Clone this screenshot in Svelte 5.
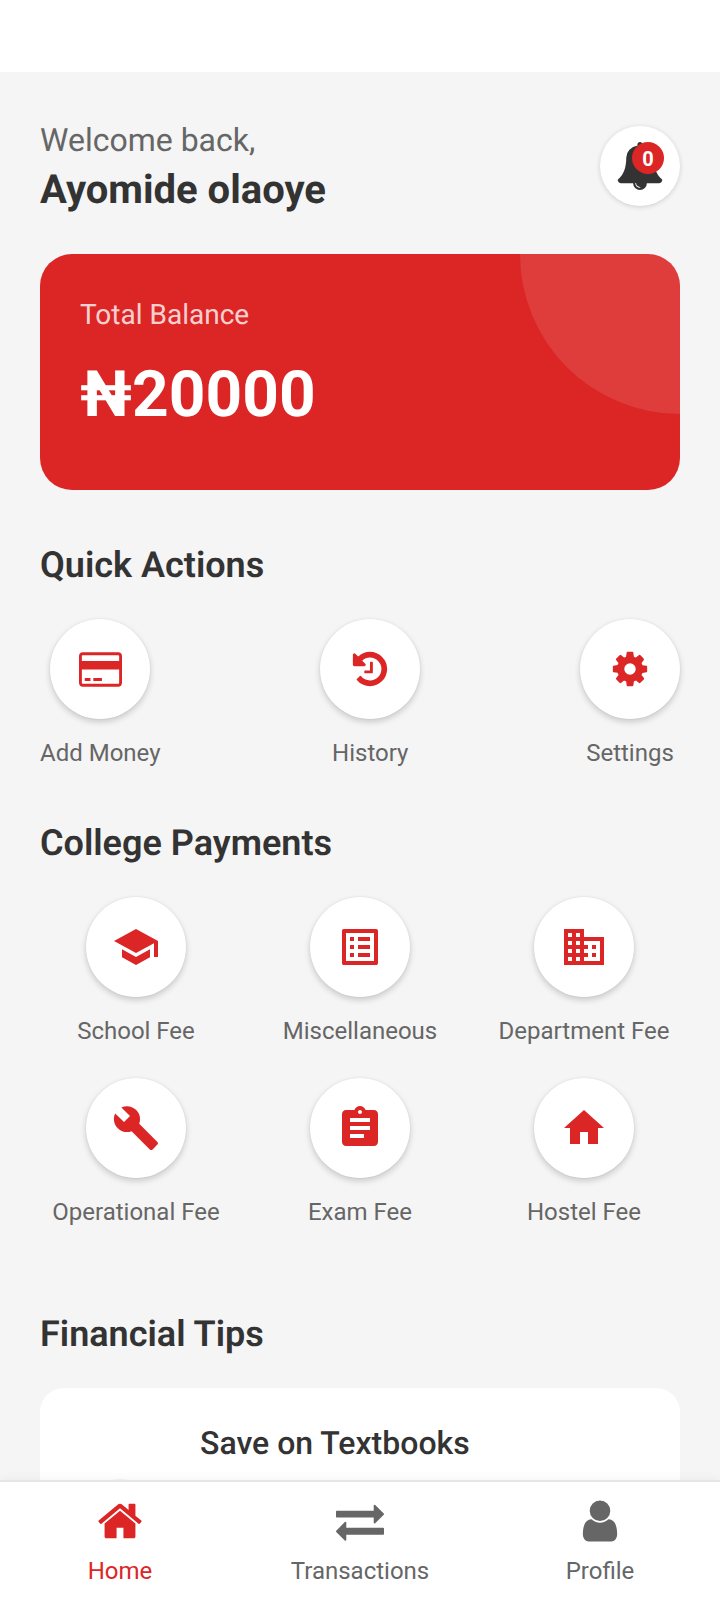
<script>
  const icons = {
    bell: {
      box: '0 0 1792 1792',
      d: 'M912 1696q0-16-16-16-59 0-101.5-42.5t-42.5-101.5q0-16-16-16t-16 16q0 73 51.5 124.5t124.5 51.5q16 0 16-16zm816-288q0 52-38 90t-90 38h-448q0 106-75 181t-181 75-181-75-75-181h-448q-52 0-90-38t-38-90q50-42 91-88t85-119.5 74.5-158.5 50-206 19.5-260q0-152 117-282.5t307-158.5q-8-19-8-39 0-40 28-68t68-28 68 28 28 68q0 20-8 39 190 28 307 158.5t117 282.5q0 139 19.5 260t50 206 74.5 158.5 85 119.5 91 88z'
    },
    card: {
      box: '0 -192 1920 1920',
      d: 'M1760 0q66 0 113 47t47 113v1216q0 66-47 113t-113 47h-1600q-66 0-113-47t-47-113v-1216q0-66 47-113t113-47h1600zm-1600 128q-13 0-22.5 9.5t-9.5 22.5v224h1664v-224q0-13-9.5-22.5t-22.5-9.5h-1600zm1600 1280q13 0 22.5-9.5t9.5-22.5v-608h-1664v608q0 13 9.5 22.5t22.5 9.5h1600zm-1504-128v-128h256v128h-256zm384 0v-128h384v128h-384z'
    },
    history: {
      box: '0 0 1792 1792',
      d: 'M1664 896q0 156-61 298t-164 245-245 164-298 61q-172 0-327-72.5t-264-204.5q-7-10-6.5-22.5t8.5-20.5l137-138q10-9 25-9 16 2 23 12 73 95 179 147t225 52q104 0 198.5-40.5t163.5-109.5 109.5-163.5 40.5-198.5-40.5-198.5-109.5-163.5-163.5-109.5-198.5-40.5q-98 0-188 35.5t-160 101.5l137 138q31 30 14 69-17 40-59 40h-448q-26 0-45-19t-19-45v-448q0-42 40-59 39-17 69 14l130 129q107-101 244.5-156.5t284.5-55.5q156 0 298 61t245 164 164 245 61 298zm-640-288v448q0 14-9 23t-23 9h-320q-14 0-23-9t-9-23v-64q0-14 9-23t23-9h224v-352q0-14 9-23t23-9h64q14 0 23 9t9 23z'
    },
    cog: {
      box: '0 0 1792 1792',
      d: 'M1152 896q0-106-75-181t-181-75-181 75-75 181 75 181 181 75 181-75 75-181zm512-109v222q0 12-8 23t-20 13l-185 28q-19 54-39 91 35 50 107 138 10 12 10 25t-9 23q-27 37-99 108t-94 71q-12 0-26-9l-138-108q-44 23-91 38-16 136-29 186-7 28-36 28h-222q-14 0-24.5-8.5t-11.5-21.5l-28-184q-49-16-90-37l-141 107q-10 9-25 9-14 0-25-11-126-114-165-168-7-10-7-23 0-12 8-23 15-21 51-66.5t54-70.5q-27-50-41-99l-183-27q-13-2-21-12.5t-8-23.5v-222q0-12 8-23t19-13l186-28q14-46 39-92-40-57-107-138-10-12-10-24 0-10 9-23 26-36 98.5-107.5t94.5-71.5q13 0 26 10l138 107q44-23 91-38 16-136 29-186 7-28 36-28h222q14 0 24.5 8.5t11.5 21.5l28 184q49 16 90 37l142-107q9-9 24-9 13 0 25 10 129 119 165 170 7 8 7 22 0 12-8 23-15 21-51 66.5t-54 70.5q26 50 41 98l183 28q13 2 21 12.5t8 23.5z'
    },
    school: {
      box: '0 0 24 24',
      d: 'M5 13.18v4L12 21l7-3.82v-4L12 17l-7-3.82zM12 3L1 9l11 6 9-4.91V17h2V9L12 3z'
    },
    list: {
      box: '0 0 24 24',
      d: 'M19 5v14H5V5h14m1.1-2H3.9c-.5 0-.9.4-.9.9v16.2c0 .4.4.9.9.9h16.2c.4 0 .9-.5.9-.9V3.9c0-.5-.5-.9-.9-.9zM11 7h6v2h-6V7zm0 4h6v2h-6v-2zm0 4h6v2h-6zM7 7h2v2H7zm0 4h2v2H7zm0 4h2v2H7z'
    },
    building: {
      box: '0 0 24 24',
      d: 'M12 7V3H2v18h20V7H12zM6 19H4v-2h2v2zm0-4H4v-2h2v2zm0-4H4V9h2v2zm0-4H4V5h2v2zm4 12H8v-2h2v2zm0-4H8v-2h2v2zm0-4H8V9h2v2zm0-4H8V5h2v2zm10 12h-8v-2h2v-2h-2v-2h2v-2h-2V9h8v10zm-2-8h-2v2h2v-2zm0 4h-2v2h2v-2z'
    },
    wrench: {
      box: '0 0 24 24',
      d: 'M22.7 19l-9.1-9.1c.9-2.3.4-5-1.5-6.9-2-2-5-2.4-7.4-1.3L9 6 6 9 1.6 4.7C.4 7.1.9 10.1 2.9 12.1c1.9 1.9 4.6 2.4 6.9 1.5l9.1 9.1c.4.4 1 .4 1.4 0l2.3-2.3c.5-.4.5-1.1.1-1.4z'
    },
    clipboard: {
      box: '0 0 24 24',
      d: 'M19 3h-4.18C14.4 1.84 13.3 1 12 1c-1.3 0-2.4.84-2.82 2H5c-1.1 0-2 .9-2 2v14c0 1.1.9 2 2 2h14c1.1 0 2-.9 2-2V5c0-1.1-.9-2-2-2zm-7 0c.55 0 1 .45 1 1s-.45 1-1 1-1-.45-1-1 .45-1 1-1zm2 14H7v-2h7v2zm3-4H7v-2h10v2zm0-4H7V7h10v2z'
    },
    house: {
      box: '0 0 24 24',
      d: 'M10 20v-6h4v6h5v-8h3L12 3 2 12h3v8z'
    },
    home: {
      box: '0 0 1792 1792',
      d: 'M1472 992v480q0 26-19 45t-45 19h-384v-384h-256v384h-384q-26 0-45-19t-19-45v-480q0-1 .5-3t.5-3l575-474 575 474q1 2 1 6zm223-69l-62 74q-8 9-21 11h-3q-13 0-21-7l-692-577-692 577q-12 8-24 7-13-2-21-11l-62-74q-8-10-7-23.5t11-21.5l719-599q32-26 76-26t76 26l244 204v-195q0-14 9-23t23-9h192q14 0 23 9t9 23v408l219 182q10 8 11 21.5t-7 23.5z'
    },
    exchange: {
      box: '0 0 1792 1792',
      d: 'M1792 1184v192q0 13-9.5 22.5t-22.5 9.5h-1376v192q0 13-9.5 22.5t-22.5 9.5q-12 0-24-10l-319-320q-9-9-9-22 0-14 9-23l320-320q9-9 23-9 13 0 22.5 9.5t9.5 22.5v192h1376q13 0 22.5 9.5t9.5 22.5zm0-544q0 14-9 23l-320 320q-9 9-23 9-13 0-22.5-9.5t-9.5-22.5v-192h-1376q-13 0-22.5-9.5t-9.5-22.5v-192q0-13 9.5-22.5t22.5-9.5h1376v-192q0-14 9-23t23-9q12 0 24 10l319 319q9 9 9 23z'
    },
    user: {
      box: '0 0 1792 1792',
      d: 'M1536 1399q0 109-62.5 187t-150.5 78h-854q-88 0-150.5-78t-62.5-187q0-85 8.5-160.5t31.5-152 58.5-131 94-89 134.5-34.5q131 128 313 128t313-128q76 0 134.5 34.5t94 89 58.5 131 31.5 152 8.5 160.5zm-256-887q0 159-112.5 271.5t-271.5 112.5-271.5-112.5-112.5-271.5 112.5-271.5 271.5-112.5 271.5 112.5 112.5 271.5z'
    }
  };

  const actions = [
    { label: 'Add Money', icon: 'card', size: 43 },
    { label: 'History', icon: 'history', size: 40 },
    { label: 'Settings', icon: 'cog', size: 40 }
  ];

  const payments = [
    { label: 'School Fee', icon: 'school', size: 48 },
    { label: 'Miscellaneous', icon: 'list', size: 48 },
    { label: 'Department Fee', icon: 'building', size: 48 },
    { label: 'Operational Fee', icon: 'wrench', size: 48 },
    { label: 'Exam Fee', icon: 'clipboard', size: 48 },
    { label: 'Hostel Fee', icon: 'house', size: 48 }
  ];

  const tabs = [
    { label: 'Home', icon: 'home' },
    { label: 'Transactions', icon: 'exchange' },
    { label: 'Profile', icon: 'user' }
  ];

  let current = $state('Home');
</script>

{#snippet glyph(name, size)}
  <svg viewBox={icons[name].box} width={size} height={size} fill="currentColor" aria-hidden="true">
    <path d={icons[name].d} />
  </svg>
{/snippet}

{#snippet tile(item)}
  <button class="tile" type="button">
    <span class="disc">{@render glyph(item.icon, item.size)}</span>
    <span class="label">{item.label}</span>
  </button>
{/snippet}

<div class="app">
  <div class="status"></div>

  <main>
    <header>
      <div>
        <p class="welcome">Welcome back,</p>
        <h1>Ayomide olaoye</h1>
      </div>
      <button class="bell" type="button" aria-label="Notifications">
        {@render glyph('bell', 48)}
        <span class="badge">0</span>
      </button>
    </header>

    <section class="balance">
      <p class="caption">Total Balance</p>
      <p class="amount">₦20000</p>
    </section>

    <section>
      <h2>Quick Actions</h2>
      <div class="actions">
        {#each actions as item}
          {@render tile(item)}
        {/each}
      </div>
    </section>

    <section class="payments">
      <h2>College Payments</h2>
      <div class="grid">
        {#each payments as item}
          {@render tile(item)}
        {/each}
      </div>
    </section>

    <section>
      <h2>Financial Tips</h2>
      <article class="tip">
        <span class="tip-icon"></span>
        <h3>Save on Textbooks</h3>
      </article>
    </section>
  </main>

  <nav>
    {#each tabs as tab}
      <button
        type="button"
        class:active={current === tab.label}
        onclick={() => (current = tab.label)}
      >
        {@render glyph(tab.icon, 48)}
        <span class="label">{tab.label}</span>
      </button>
    {/each}
  </nav>
</div>

<style>
  :global(body) {
    margin: 0;
    background: #f5f5f5;
  }

  .app {
    display: flex;
    flex-direction: column;
    height: 100vh;
    font-family: Roboto, sans-serif;
    text-rendering: geometricPrecision;
    color: #333;
    background: #f5f5f5;
  }

  .status {
    flex: none;
    height: 72px;
    background: #fff;
  }

  main {
    flex: 1;
    min-height: 0;
    overflow-y: auto;
    scrollbar-width: none;
    padding: 46px 40px 0;
  }

  h1, h2, h3, p {
    margin: 0;
  }

  button {
    border: 0;
    padding: 0;
    background: none;
    font: inherit;
    color: inherit;
    cursor: pointer;
  }

  svg {
    display: block;
  }

  header {
    display: flex;
    justify-content: space-between;
    align-items: center;
    margin-bottom: 40px;
  }

  .welcome {
    font-size: 32px;
    line-height: 44px;
    color: #666;
    margin-bottom: 4px;
  }

  h1 {
    font-size: 40px;
    line-height: 48px;
    font-weight: 700;
  }

  .bell {
    position: relative;
    display: grid;
    place-items: center;
    width: 80px;
    height: 80px;
    border-radius: 50%;
    background: #fff;
    box-shadow: 0 1px 5px rgba(0, 0, 0, 0.16);
  }

  .badge {
    position: absolute;
    top: 16px;
    right: 16px;
    width: 32px;
    height: 32px;
    border-radius: 50%;
    background: #dc2626;
    color: #fff;
    font-size: 20px;
    line-height: 34px;
    font-weight: 700;
    text-align: center;
  }

  .balance {
    position: relative;
    overflow: hidden;
    padding: 44px 40px 57px;
    border-radius: 32px;
    background: #dc2626;
    color: #fff;
    margin-bottom: 54px;
  }

  .balance::after {
    content: '';
    position: absolute;
    top: -160px;
    right: -160px;
    width: 320px;
    height: 320px;
    border-radius: 50%;
    background: rgba(255, 255, 255, 0.1);
  }

  .caption {
    font-size: 28px;
    line-height: 34px;
    margin-bottom: 25px;
    color: rgba(255, 255, 255, 0.8);
  }

  .amount {
    font-size: 64px;
    line-height: 76px;
    font-weight: 700;
  }

  h2 {
    font-size: 36px;
    line-height: 42px;
    font-weight: 600;
    margin-bottom: 33px;
  }

  .actions {
    display: flex;
    justify-content: space-between;
    margin-bottom: 55px;
  }

  .grid {
    display: grid;
    grid-template-columns: repeat(3, 1fr);
    gap: 33px 32px;
  }

  .payments {
    margin-bottom: 87px;
  }

  .tile {
    display: flex;
    flex-direction: column;
    align-items: center;
    gap: 20px;
    color: #666;
  }

  .disc {
    display: grid;
    place-items: center;
    width: 100px;
    height: 100px;
    border-radius: 50%;
    background: #fff;
    color: #dc2626;
    box-shadow: 0 3px 6px rgba(0, 0, 0, 0.18), 0 0 2px rgba(0, 0, 0, 0.08);
  }

  .label {
    font-size: 24px;
    line-height: 28px;
    white-space: nowrap;
  }

  .tip {
    display: flex;
    gap: 40px;
    min-height: 190px;
    padding: 36px 40px;
    border-radius: 24px;
    background: #fff;
  }

  .tip-icon {
    align-self: center;
    width: 80px;
    height: 80px;
    border-radius: 50%;
    background: #fdf0ee;
  }

  h3 {
    font-size: 32px;
    line-height: 38px;
    font-weight: 500;
  }

  nav {
    position: relative;
    flex: none;
    display: grid;
    grid-template-columns: repeat(3, 1fr);
    padding: 15px 0;
    border-top: 2px solid #e5e5ea;
    background: #fff;
    box-shadow: 0 0 10px rgba(0, 0, 0, 0.06);
  }

  nav button {
    display: flex;
    flex-direction: column;
    align-items: center;
    gap: 12px;
    color: #666;
  }

  nav button.active {
    color: #dc2626;
  }
</style>
